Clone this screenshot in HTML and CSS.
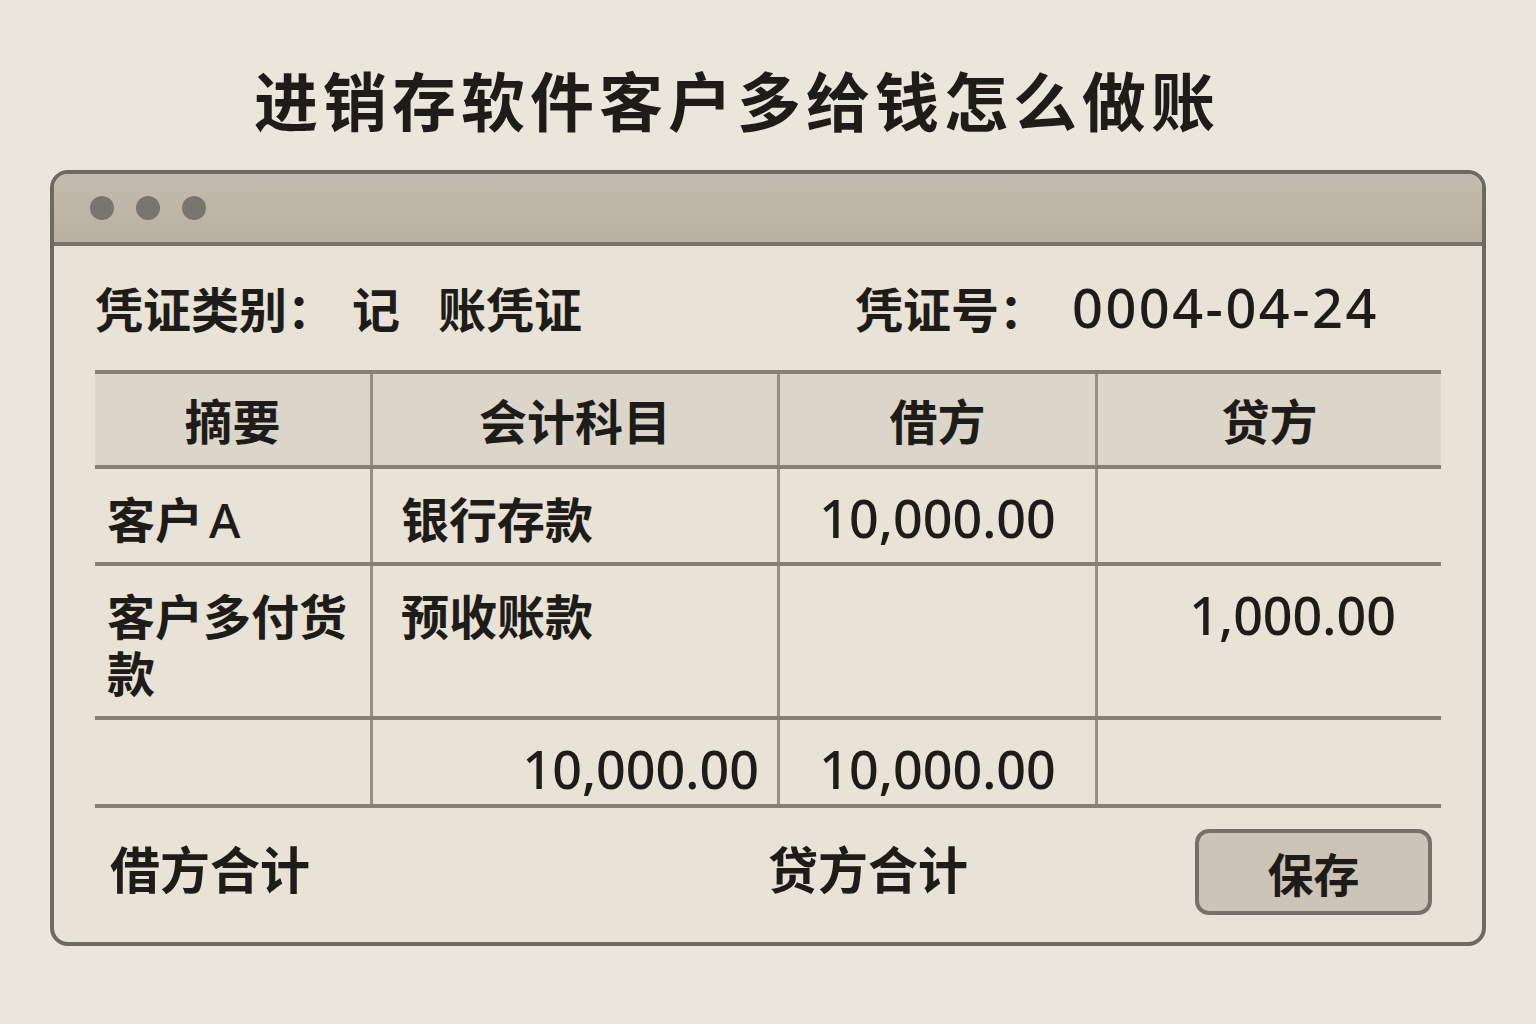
FILE: index.html
```html
<!DOCTYPE html>
<html lang="zh-CN">
<head>
  <meta charset="UTF-8" />
  <meta name="viewport" content="width=device-width, initial-scale=1.0"/>
  <title>进销存软件客户多给钱怎么做账</title>
  <link rel="stylesheet" href="styles.css">
</head>
<body>
  <h1 class="title">进销存软件客户多给钱怎么做账</h1>

  <div class="window">
    <div class="titlebar">
      <span class="dot"></span>
      <span class="dot"></span>
      <span class="dot"></span>
    </div>

    <div class="content">
      <!-- 凭证信息 -->
      <div class="info">
        <div class="info-left">
          <span>凭证类别：</span>
          <span class="type-a">记</span>
          <span class="type-b">账凭证</span>
        </div>
        <div class="info-right">
          <span>凭证号：</span>
          <span class="num voucher-no">0004-04-24</span>
        </div>
      </div>

      <!-- 分录表 -->
      <div class="grid">
        <div class="row head">
          <div class="cell">摘要</div>
          <div class="cell">会计科目</div>
          <div class="cell">借方</div>
          <div class="cell">贷方</div>
        </div>
        <div class="row r1">
          <div class="cell c1">客户<span class="latin">A</span></div>
          <div class="cell c2">银行存款</div>
          <div class="cell c3 num">10,000.00</div>
          <div class="cell c4 num"></div>
        </div>
        <div class="row r2">
          <div class="cell c1">客户多付货款</div>
          <div class="cell c2">预收账款</div>
          <div class="cell c3 num"></div>
          <div class="cell c4 num">1,000.00</div>
        </div>
        <div class="row r3">
          <div class="cell c1"></div>
          <div class="cell c2 num total">10,000.00</div>
          <div class="cell c3 num">10,000.00</div>
          <div class="cell c4 num"></div>
        </div>
      </div>

      <div class="footer">
        <span class="label">借方合计</span>
        <span class="label">贷方合计</span>
        <button class="save">保存</button>
      </div>
    </div>
  </div>
</body>
</html>
```

FILE: styles.css
```css
body {
  margin: 0;
  padding: 0;
  background: #ebe6dc;
  color: #1e1c19;
  font-family: "Noto Sans CJK SC", "Noto Sans", sans-serif;
}
.title {
  margin: 0;
  padding: 58px 0 0 254px;
  height: 80px;
  line-height: 80px;
  font-size: 64px;
  font-weight: 700;
  letter-spacing: 5px;
  white-space: nowrap;
}
.window {
  margin: 32px 0 0 50px;
  width: 1428px;
  border: 4px solid #6f6a61;
  border-radius: 18px;
  background: #e8e2d7;
  overflow: hidden;
}
.titlebar {
  height: 68px;
  display: flex;
  align-items: center;
  gap: 22px;
  padding-left: 36px;
  background: linear-gradient(#c3bcae, #b9b1a2);
  border-bottom: 4px solid #77726a;
}
.dot {
  width: 24px;
  height: 24px;
  border-radius: 50%;
  background: #7b766d;
}
.content {
  padding: 36px 41px 27px 41px;
}
.info {
  display: flex;
  height: 50px;
  line-height: 50px;
  font-size: 48px;
  font-weight: 700;
  white-space: nowrap;
}
.info-left {
  display: flex;
  width: 760px;
}
.info-right {
  display: flex;
}
.type-a { margin-left: 17px; }
.type-b { margin-left: 38px; }
.voucher-no {
  margin-left: 25px;
  font-size: 54px;
  letter-spacing: 2.5px;
}
.num {
  font-family: "Noto Sans", "Open Sans", sans-serif;
  font-weight: 500;
}
.grid {
  margin-top: 38px;
  width: 1346px;
  border-top: 4px solid #857f74;
}
.row {
  display: grid;
  grid-template-columns: 275px 407px 318px 346px;
  border-bottom: 4px solid #857f74;
}
.cell {
  border-left: 3px solid #958f84;
  font-size: 48px;
  font-weight: 700;
  line-height: 57px;
}
.cell:first-child {
  border-left: none;
}
.head {
  height: 91px;
  background: #dbd5ca;
}
.head .cell {
  display: flex;
  align-items: center;
  justify-content: center;
}
.r1 { height: 93px; }
.r2 { height: 150px; }
.r3 { height: 84px; }
.r1 .cell, .r2 .cell, .r3 .cell {
  padding-top: 20px;
  box-sizing: border-box;
}
.c1 { padding-left: 12px; padding-right: 8px; }
.c2 { padding-left: 28px; }
.c3 { text-align: center; }
.c4 { text-align: right; padding-right: 45px; }
.num.cell {
  font-size: 52px;
  font-weight: 500;
}
.total {
  text-align: right;
  padding-right: 18px;
}
.latin {
  font-family: "Noto Sans", sans-serif;
  font-weight: 500;
  margin-left: 6px;
}
.footer {
  display: grid;
  grid-template-columns: 658px 427px 237px;
  align-items: center;
  margin-top: 21px;
  padding-left: 15px;
}
.label {
  margin-bottom: 10px;
  font-size: 50px;
  font-weight: 700;
  line-height: 1;
  white-space: nowrap;
}
.save {
  height: 86px;
  border: 4px solid #77716a;
  border-radius: 14px;
  background: #cbc4b7;
  color: #1e1c19;
  font-family: "Noto Sans CJK SC", sans-serif;
  font-size: 46px;
  font-weight: 700;
  line-height: 1;
  cursor: pointer;
}
```
